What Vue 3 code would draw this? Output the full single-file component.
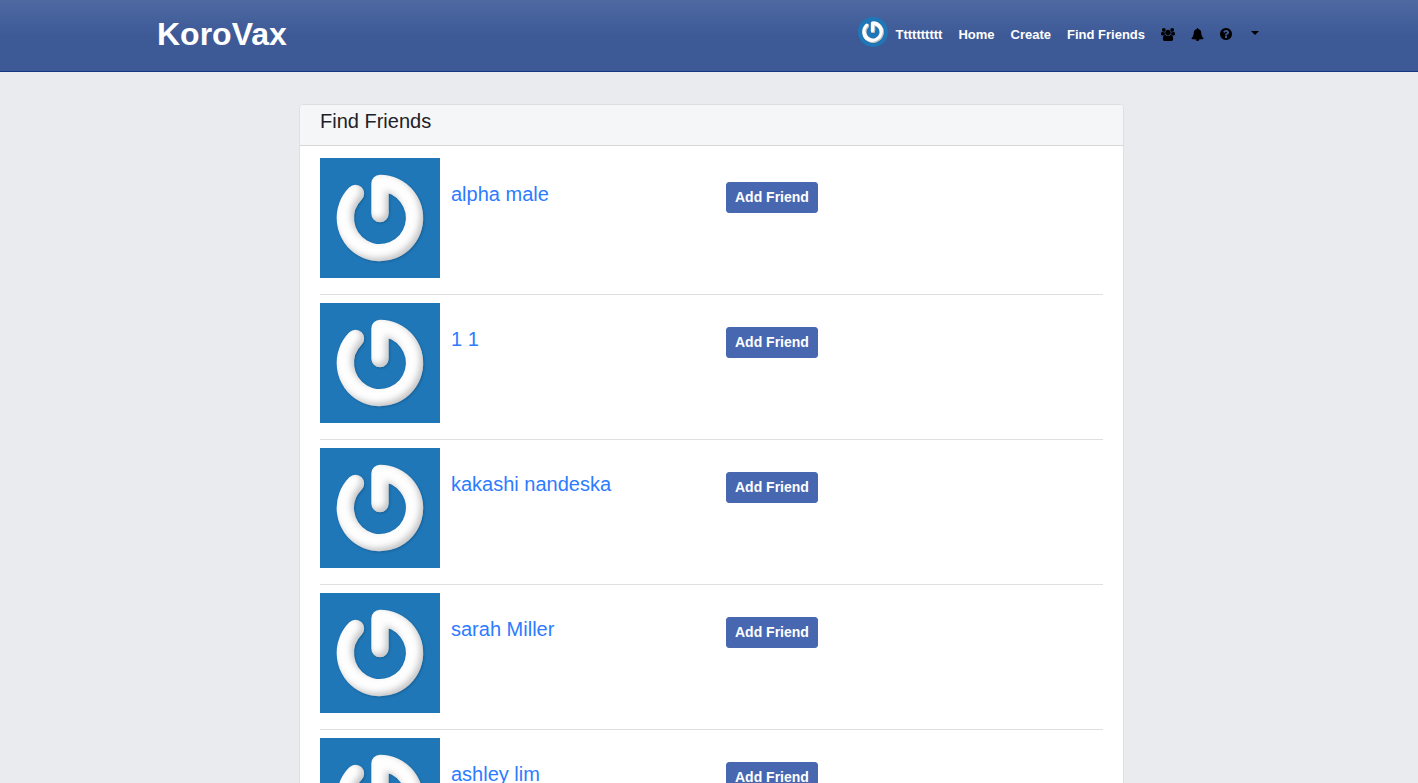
<script setup>
const friends = ['alpha male', '1 1', 'kakashi nandeska', 'sarah Miller', 'ashley lim']
</script>

<template>
  <svg class="defs" aria-hidden="true">
    <defs>
      <filter id="relief" filterUnits="userSpaceOnUse" x="0" y="0" width="120" height="120" color-interpolation-filters="sRGB">
        <feDropShadow dx="1" dy="1" stdDeviation="1" flood-color="#0d3f66" flood-opacity="0.4" result="base" />
        <feGaussianBlur in="SourceAlpha" stdDeviation="3" result="soft" />
        <feOffset in="soft" dx="-3" dy="-3" result="moved" />
        <feComposite in="SourceAlpha" in2="moved" operator="out" result="edge" />
        <feFlood flood-color="#75757a" flood-opacity="0.42" />
        <feComposite in2="edge" operator="in" result="shade" />
        <feMerge>
          <feMergeNode in="base" />
          <feMergeNode in="shade" />
        </feMerge>
      </filter>
      <symbol id="avatar" viewBox="0 0 120 120">
        <rect width="120" height="120" fill="#1f77b7" />
        <path
          d="M35.5 35.5A34.6 34.6 0 1 0 60 25.4V55.5"
          fill="none"
          stroke="#fefefe"
          stroke-width="17.4"
          stroke-linecap="round"
          stroke-linejoin="round"
          filter="url(#relief)"
        />
      </symbol>
    </defs>
  </svg>

  <header class="topbar">
    <div class="topbar-inner">
      <a class="brand" href="#">KoroVax</a>
      <nav class="menu">
        <a class="profile" href="#">
          <svg class="thumb" aria-hidden="true"><use href="#avatar" /></svg>
          <span class="label">Tttttttttt</span>
        </a>
        <a class="label" href="#">Home</a>
        <a class="label" href="#">Create</a>
        <a class="label" href="#">Find Friends</a>
        <a class="icon" href="#" aria-label="Friend requests">
          <svg width="14" height="13" viewBox="64 0 1920 1792"><path d="M657 896q-162 5-265 128h-134q-82 0-138-40.500t-56-118.500q0-353 124-353 6 0 43.500 21t97.500 42.500 119 21.500q67 0 133-23-5 37-5 66 0 139 81 256zm1071 637q0 120-73 189.500t-194 69.500h-874q-121 0-194-69.500t-73-189.500q0-53 3.500-103.500t14-109 26.500-108.500 43-97.500 62-81 85.500-53.500 111.500-20q10 0 43 21.500t73 48 107 48 135 21.500 135-21.500 107-48 73-48 43-21.500q61 0 111.500 20t85.500 53.500 62 81 43 97.500 26.500 108.500 14 109 3.500 103.500zm-1024-1277q0 106-75 181t-181 75-181-75-75-181 75-181 181-75 181 75 75 181zm704 384q0 159-112.500 271.500t-271.500 112.500-271.500-112.500-112.500-271.500 112.500-271.500 271.500-112.500 271.500 112.500 112.500 271.500zm576 225q0 78-56 118.500t-138 40.500h-134q-103-123-265-128 81-117 81-256 0-29-5-66 66 23 133 23 59 0 119-21.500t97.500-42.500 43.500-21q124 0 124 353zm-128-609q0 106-75 181t-181 75-181-75-75-181 75-181 181-75 181 75 75 181z" /></svg>
        </a>
        <a class="icon" href="#" aria-label="Notifications">
          <svg width="13" height="13" viewBox="0 0 1792 1792"><path d="M912 1696q0-16-16-16-59 0-101.500-42.500t-42.500-101.500q0-16-16-16t-16 16q0 73 51.500 124.500t124.500 51.500q16 0 16-16zm816-288q0 52-38 90t-90 38h-448q0 106-75 181t-181 75-181-75-75-181h-448q-52 0-90-38t-38-90q50-42 91-88t85-119.500 74.500-158.500 50-206 19.500-260q0-152 117-282.500t307-158.500q-8-19-8-39 0-40 28-68t68-28 68 28 28 68q0 20-8 39 190 28 307 158.500t117 282.500q0 139 19.500 260t50 206 74.500 158.500 85 119.500 91 88z" /></svg>
        </a>
        <a class="icon" href="#" aria-label="Help">
          <svg width="12" height="14" viewBox="128 0 1536 1792"><path d="M1024 1376v-192q0-14-9-23t-23-9h-192q-14 0-23 9t-9 23v192q0 14 9 23t23 9h192q14 0 23-9t9-23zm256-672q0-88-55.500-163t-138.500-116-170-41q-243 0-371 213-15 24 8 42l132 100q7 6 19 6 16 0 25-12 53-68 86-92 34-24 86-24 48 0 85.500 26t37.500 59q0 38-20 61t-68 45q-63 28-115.500 86.500t-52.500 125.500v36q0 14 9 23t23 9h192q14 0 23-9t9-23q0-19 21.500-49.500t54.500-49.500q32-18 49-28.500t46-35 44.500-48 28-60.500 12.500-81zm384 192q0 209-103 385.500t-279.500 279.500-385.500 103-385.500-103-279.500-279.500-103-385.500 103-385.500 279.500-279.500 385.500-103 385.500 103 279.500 279.500 103 385.500z" /></svg>
        </a>
        <button class="more" type="button" aria-label="Account menu"><span class="caret"></span></button>
      </nav>
    </div>
  </header>

  <main class="page">
    <section class="card">
      <h1 class="card-header">Find Friends</h1>
      <ul class="list">
        <li v-for="name in friends" :key="name" class="row">
          <svg class="photo" role="img" :aria-label="name"><use href="#avatar" /></svg>
          <a class="name" href="#">{{ name }}</a>
          <button class="add" type="button">Add Friend</button>
        </li>
      </ul>
    </section>
  </main>
</template>

<style>
body {
  margin: 0;
  background: #e9ebee;
  font-family: "Liberation Sans", Arial, sans-serif;
}
</style>

<style scoped>
.defs {
  position: absolute;
  width: 0;
  height: 0;
}
a {
  text-decoration: none;
}
.topbar {
  box-sizing: border-box;
  height: 72px;
  background: linear-gradient(#4f69a2, #3d5a97 50%);
  border-bottom: 1px solid #133783;
}
.topbar-inner {
  display: flex;
  align-items: center;
  justify-content: space-between;
  max-width: 1104px;
  height: 68px;
  margin: 0 auto;
}
.brand {
  color: #fff;
  font-size: 32px;
  font-weight: bold;
  line-height: 48px;
}
.menu {
  display: flex;
  align-items: center;
  gap: 16px;
  font-size: 13px;
  font-weight: bold;
  line-height: 20px;
}
.menu a {
  color: #fff;
}
.label {
  padding-top: 2px;
}
.profile {
  display: flex;
  align-items: center;
  gap: 8px;
}
.thumb {
  width: 30px;
  height: 30px;
  margin-bottom: 4px;
  border-radius: 50%;
}
.icon {
  display: flex;
}
.icon svg {
  fill: #000;
}
.more {
  padding: 0 2px 2px 3px;
  border: 0;
  background: none;
  line-height: 0;
}
.caret {
  display: inline-block;
  border: 4px solid transparent;
  border-top-color: #000;
  border-bottom: 0;
}
.page {
  padding: 32px 0 32px 5px;
}
.card {
  box-sizing: border-box;
  max-width: 825px;
  margin: 0 auto;
  background: #fff;
  border: 1px solid #dddfe2;
  border-radius: 4px;
}
.card-header {
  margin: 0;
  padding: 4px 20px 12px;
  background: #f5f6f7;
  border-bottom: 1px solid #d5d7d9;
  border-radius: 3px 3px 0 0;
  color: #1d2129;
  font-size: 20px;
  font-weight: normal;
  line-height: 24px;
}
.list {
  margin: 0;
  padding: 4px 20px 12px;
  list-style: none;
}
.row {
  display: grid;
  grid-template-columns: 120px 264px auto;
  column-gap: 11px;
  align-items: start;
  justify-content: start;
  padding: 8px 0 16px;
  border-bottom: 1px solid #dddfe2;
}
.row:last-child {
  border-bottom: 0;
}
.photo {
  display: block;
  width: 120px;
  height: 120px;
}
.name {
  margin-top: 24px;
  color: #2d7bff;
  font-size: 20px;
  line-height: 24px;
}
.add {
  height: 31px;
  margin-top: 24px;
  padding: 0 8px 2px;
  border: 1px solid #4767b1;
  border-radius: 3px;
  background: #4767b1;
  color: #fff;
  font: bold 14px "Liberation Sans", Arial, sans-serif;
}
</style>
